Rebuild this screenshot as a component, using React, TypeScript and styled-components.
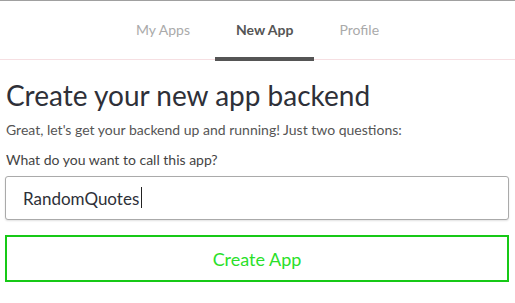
import React from "react";
import styled, { createGlobalStyle } from "styled-components";

const Global = createGlobalStyle`
  html, body { margin: 0; padding: 0; background: #fff; }
  body { font-family: Lato, "Liberation Sans", sans-serif; border-top: 1px solid #a0a0a0; }
  * { box-sizing: border-box; }
`;

const Nav = styled.nav`
  height: 59px;
  display: flex;
  justify-content: center;
  gap: 4px;
  border-bottom: 1px solid #f6dfe2;
`;

const Tab = styled.a<{ $active?: boolean }>`
  height: 60px;
  margin-bottom: -1px;
  padding: 0 21px;
  display: flex;
  align-items: center;
  font-size: 14px;
  font-weight: ${(p) => (p.$active ? 700 : 400)};
  color: ${(p) => (p.$active ? "#555" : "#aaa")};
  border-bottom: 4px solid ${(p) => (p.$active ? "#555" : "transparent")};
  text-decoration: none;
  cursor: pointer;
`;

const Main = styled.main`
  padding: 0 6px 0 5px;
`;

const Title = styled.h1`
  margin: 18px 0 0 1px;
  font-size: 28px;
  font-weight: 400;
  color: #2e3038;
  line-height: 34px;
`;

const Lead = styled.p`
  margin: 9px 0 0 1px;
  font-size: 14px;
  color: #555;
  line-height: 18px;
`;

const Label = styled.label`
  display: block;
  margin: 12px 0 0 1px;
  font-size: 14px;
  color: #444;
  line-height: 18px;
`;

const Field = styled.div`
  position: relative;
  margin-top: 7px;
`;

const Input = styled.input`
  display: block;
  width: 100%;
  height: 44px;
  padding: 0 16px 0 17px;
  border: 1px solid #aaa;
  border-radius: 3px;
  box-shadow: 0 1px 2px rgba(0, 0, 0, 0.12);
  font-family: Lato, "Liberation Sans", sans-serif;
  font-size: 17px;
  color: #2e3038;
  outline: none;
  caret-color: transparent;
`;

const Caret = styled.span`
  position: absolute;
  left: 136px;
  top: 11px;
  width: 1px;
  height: 21px;
  background: #222;
  pointer-events: none;
`;

const Button = styled.button`
  display: block;
  width: 100%;
  height: 47px;
  margin-top: 15px;
  border: 2px solid #16c916;
  background: #fff;
  color: #2adf2a;
  font-family: Lato, "Liberation Sans", sans-serif;
  font-size: 18px;
  cursor: pointer;
`;

export default function App() {
  return (
    <>
      <Global />
      <Nav>
        <Tab>My Apps</Tab>
        <Tab $active>New App</Tab>
        <Tab>Profile</Tab>
      </Nav>
      <Main>
        <Title>Create your new app backend</Title>
        <Lead>Great, let's get your backend up and running! Just two questions:</Lead>
        <Label htmlFor="appname">What do you want to call this app?</Label>
        <Field>
          <Input id="appname" defaultValue="RandomQuotes" />
          <Caret />
        </Field>
        <Button>Create App</Button>
      </Main>
    </>
  );
}
